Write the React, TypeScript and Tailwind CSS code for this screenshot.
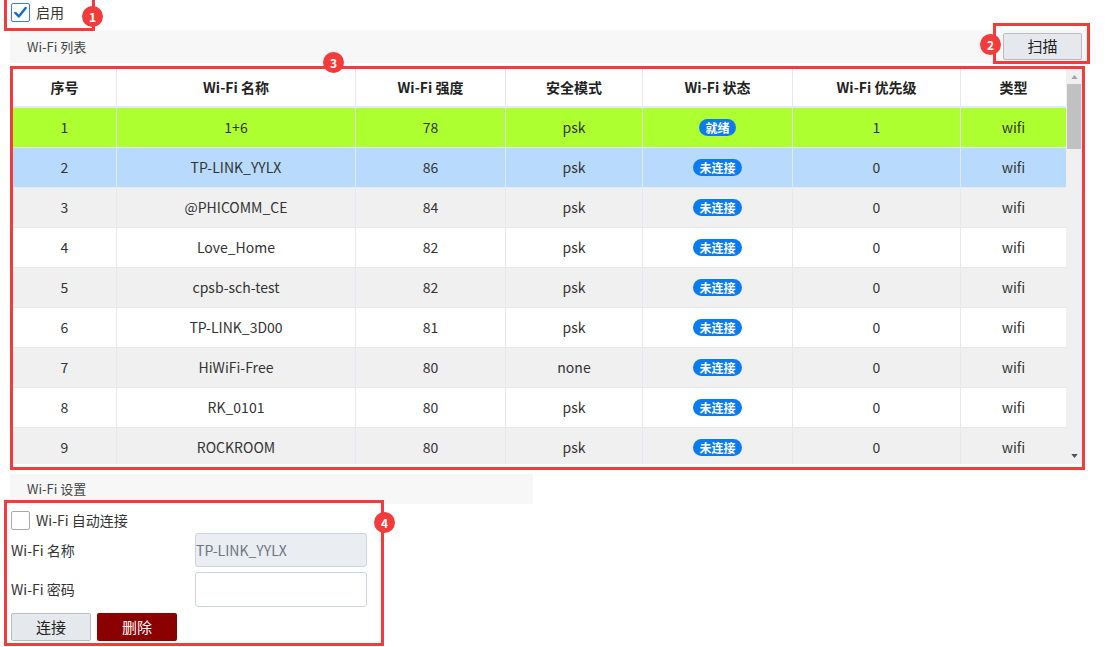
import React from 'react';

type Row = {
  id: number;
  name: string;
  strength: number;
  security: string;
  status: string;
  priority: number;
  kind: string;
};

const rows: Row[] = [
  { id: 1, name: '1+6', strength: 78, security: 'psk', status: '就绪', priority: 1, kind: 'wifi' },
  { id: 2, name: 'TP-LINK_YYLX', strength: 86, security: 'psk', status: '未连接', priority: 0, kind: 'wifi' },
  { id: 3, name: '@PHICOMM_CE', strength: 84, security: 'psk', status: '未连接', priority: 0, kind: 'wifi' },
  { id: 4, name: 'Love_Home', strength: 82, security: 'psk', status: '未连接', priority: 0, kind: 'wifi' },
  { id: 5, name: 'cpsb-sch-test', strength: 82, security: 'psk', status: '未连接', priority: 0, kind: 'wifi' },
  { id: 6, name: 'TP-LINK_3D00', strength: 81, security: 'psk', status: '未连接', priority: 0, kind: 'wifi' },
  { id: 7, name: 'HiWiFi-Free', strength: 80, security: 'none', status: '未连接', priority: 0, kind: 'wifi' },
  { id: 8, name: 'RK_0101', strength: 80, security: 'psk', status: '未连接', priority: 0, kind: 'wifi' },
  { id: 9, name: 'ROCKROOM', strength: 80, security: 'psk', status: '未连接', priority: 0, kind: 'wifi' },
];

const cols = ['w-[104px]', 'w-[239px]', 'w-[150px]', 'w-[137px]', 'w-[150px]', 'w-[168px]', 'w-[105px]'];
const heads = ['序号', 'Wi-Fi 名称', 'Wi-Fi 强度', '安全模式', 'Wi-Fi 状态', 'Wi-Fi 优先级', '类型'];

function rowBg(idx: number) {
  if (idx === 0) return 'bg-[#adff2f]';
  if (idx === 1) return 'bg-[#b8dbfd]';
  return idx % 2 === 0 ? 'bg-[#f0f0f0]' : 'bg-white';
}

function Marker({ n, className }: { n: number; className: string }) {
  return (
    <div
      className={`absolute grid h-[21px] w-[21px] place-items-center rounded-full bg-[#f23c3c] text-[12px] font-bold leading-none text-white ${className}`}
    >
      {n}
    </div>
  );
}

function Box({ className }: { className: string }) {
  return <div className={`pointer-events-none absolute border-[3px] border-[#f23c3c] ${className}`} />;
}

function Check({ on }: { on?: boolean }) {
  return (
    <span
      className={`grid h-[19px] w-[19px] place-items-center rounded-[2px] border bg-white ${on ? 'border-[#3a7fd0]' : 'border-[#a9a9a9]'}`}
    >
      {on ? (
        <svg viewBox="0 0 16 16" className="h-[15px] w-[15px]">
          <path d="M2.5 8.5 L6.2 12.2 L13.5 3.2" fill="none" stroke="#1769d4" strokeWidth="2.6" strokeLinecap="round" strokeLinejoin="round" />
        </svg>
      ) : null}
    </span>
  );
}

export default function App() {
  return (
    <div className="relative h-[647px] w-[1105px] overflow-hidden bg-white font-['Noto_Sans_CJK_SC','Noto_Sans',sans-serif] text-[#333]">
      <div className="mb-[6px] flex h-[24px] items-center gap-[6px] pl-[11px]">
        <Check on />
        <span className="text-[14px]">启用</span>
      </div>

      <div className="ml-[10px] flex h-[33px] w-[1080px] items-center justify-between bg-[#f7f7f7] pl-[17px] pr-[8px]">
        <span className="text-[13px] text-[#444]">Wi-Fi 列表</span>
        <button className="h-[27px] w-[79px] rounded-[2px] border border-[#b9bcc1] bg-[#e5e8ec] text-[15px] text-[#222]">扫描</button>
      </div>

      <div className="ml-[13px] mt-[5px] flex h-[396px] w-[1069px] overflow-hidden border-t border-[#e8edf3]">
        <div className="w-[1053px]">
          <div className="flex h-[39px] border-b-2 border-[#e3e9f0] bg-white">
            {heads.map((h, i) => (
              <div
                key={h}
                className={`${cols[i]} flex items-center justify-center border-r border-[#e3e9f0] text-[14px] font-bold text-[#222] last:border-r-0`}
              >
                {h}
              </div>
            ))}
          </div>
          {rows.map((r, idx) => {
            const cells = [r.id, r.name, r.strength, r.security, null, r.priority, r.kind];
            return (
              <div key={r.id} className={`flex h-[40px] border-b border-[#e3e9f0] ${rowBg(idx)}`}>
                {cells.map((c, i) => (
                  <div
                    key={i}
                    className={`${cols[i]} flex items-center justify-center border-r border-[#e3e9f0] text-[14px] text-[#333] last:border-r-0`}
                  >
                    {i === 4 ? (
                      <span className="rounded-full bg-[#0b7bef] px-[6px] text-[12px] font-bold leading-[17px] text-white">{r.status}</span>
                    ) : (
                      c
                    )}
                  </div>
                ))}
              </div>
            );
          })}
        </div>
        <div className="flex w-[16px] flex-col bg-[#f0f0f0]">
          <div className="flex h-[15px] items-center justify-center">
            <svg viewBox="0 0 8 5" className="h-[4px] w-[7px]">
              <path d="M0 5 L4 0 L8 5 Z" fill="#a3a3a3" />
            </svg>
          </div>
          <div className="mx-auto h-[65px] w-[14px] bg-[#c1c1c1]" />
          <div className="flex-1" />
          <div className="flex h-[17px] items-center justify-center">
            <svg viewBox="0 0 8 5" className="h-[4px] w-[7px]">
              <path d="M0 0 L8 0 L4 5 Z" fill="#505050" />
            </svg>
          </div>
        </div>
      </div>

      <div className="ml-[10px] mt-[10px] flex h-[30px] w-[523px] items-center bg-[#f7f7f7] pl-[17px]">
        <span className="text-[13px] text-[#444]">Wi-Fi 设置</span>
      </div>

      <div className="pl-[11px] pt-[6px]">
        <div className="flex h-[20px] items-center gap-[6px]">
          <Check />
          <span className="text-[14px]">Wi-Fi 自动连接</span>
        </div>
        <div className="mt-[3px] flex items-center">
          <span className="w-[184px] text-[14px]">Wi-Fi 名称</span>
          <input
            disabled
            value="TP-LINK_YYLX"
            readOnly
            className="h-[34px] w-[172px] rounded-[3px] border border-[#ccd4e0] bg-[#eaedf1] px-0 text-[14px] text-[#6b7585]"
          />
        </div>
        <div className="mt-[5px] flex items-center">
          <span className="w-[184px] text-[14px]">Wi-Fi 密码</span>
          <input className="h-[35px] w-[172px] rounded-[3px] border border-[#ccd4e0] bg-white px-2 text-[14px]" />
        </div>
        <div className="mt-[6px] flex gap-[6px]">
          <button className="h-[28px] w-[80px] rounded-[2px] border border-[#b9bcc1] bg-[#e5e8ec] text-[15px] text-[#222]">连接</button>
          <button className="h-[28px] w-[80px] rounded-[2px] bg-[#8b0000] text-[15px] text-white">删除</button>
        </div>
      </div>

      <Box className="left-[4px] top-[-3px] h-[34px] w-[91px]" />
      <Marker n={1} className="left-[82px] top-[6px]" />
      <Box className="left-[993px] top-[23px] h-[41px] w-[97px]" />
      <Marker n={2} className="left-[980px] top-[34px]" />
      <Box className="left-[10px] top-[66px] h-[404px] w-[1075px]" />
      <Marker n={3} className="left-[323px] top-[52px]" />
      <Box className="left-[4px] top-[500px] h-[146px] w-[380px]" />
      <Marker n={4} className="left-[374px] top-[512px]" />
    </div>
  );
}
